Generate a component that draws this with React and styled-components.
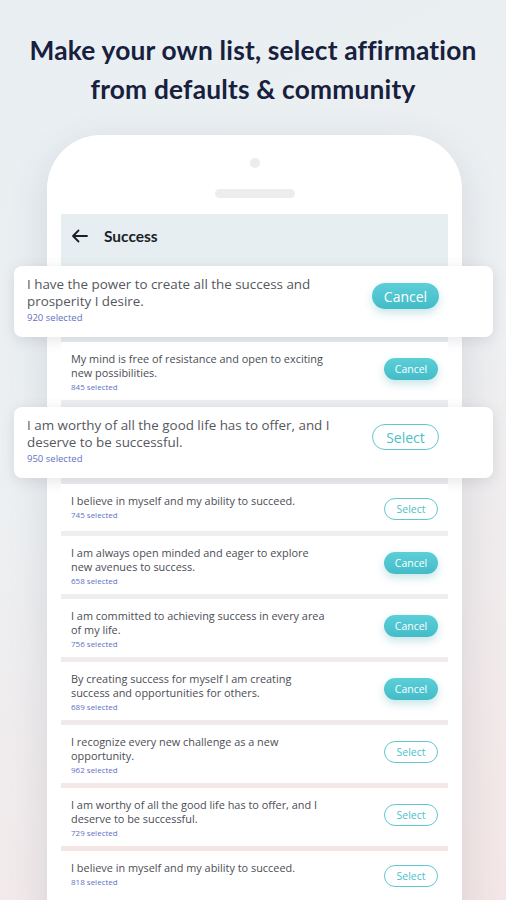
import React from "react";
import styled, { createGlobalStyle } from "styled-components";

const GlobalStyle = createGlobalStyle`
  html, body {
    margin: 0;
    padding: 0;
  }
  body {
    font-family: "Open Sans", "Lato", sans-serif;
  }
`;

const Page = styled.div`
  width: 506px;
  height: 900px;
  overflow: hidden;
  box-sizing: border-box;
  padding-top: 31px;
  background: linear-gradient(155deg, #e8eef2 0%, #edf0f2 45%, #f4e6e6 100%);
`;

const Title = styled.h1`
  margin: 0;
  text-align: center;
  font-family: "Lato", sans-serif;
  font-weight: 700;
  font-size: 26.3px;
  line-height: 39px;
  color: #17203d;
  letter-spacing: 0.2px;
`;

const Phone = styled.div`
  width: 387px;
  height: 820px;
  margin: 26px 0 0 47px;
  padding: 23px 14px 0;
  background: #ffffff;
  border-radius: 54px 54px 0 0;
  box-shadow: 0 12px 40px rgba(60, 70, 90, 0.14);
  display: flex;
  flex-direction: column;
  align-items: center;
`;

const Camera = styled.div`
  width: 10px;
  height: 10px;
  border-radius: 50%;
  background: #ececec;
`;

const Speaker = styled.div`
  width: 80px;
  height: 9px;
  margin-top: 21px;
  border-radius: 5px;
  background: #ededed;
`;

const Screen = styled.div`
  align-self: stretch;
  margin-top: 16px;
  display: flex;
  flex-direction: column;
  gap: 5px;
  background: linear-gradient(180deg, #e9eef1 0%, #eeeeef 50%, #f6e4e4 100%);
`;

const Header = styled.div`
  background: #e6eef1;
`;

const TitleBar = styled.div`
  height: 44px;
  display: flex;
  align-items: center;
  gap: 16px;
  padding: 0 10px;
  margin-bottom: 8px;
  font-family: "Lato", sans-serif;
  font-weight: 700;
  font-size: 15.5px;
  color: #1b1f2a;
`;

const Row = styled.div`
  box-sizing: border-box;
  min-height: 47px;
  background: #ffffff;
  display: flex;
  align-items: flex-start;
  justify-content: space-between;
  padding: 10px 10px 7px;
`;

const Slot = styled.div`
  padding: 2px 0 1px;
`;

const Card = styled.div`
  margin: 0 -45px 0 -47px;
  background: #ffffff;
  border-radius: 8px;
  box-shadow: 0 3px 14px rgba(70, 80, 100, 0.14);
  display: flex;
  align-items: center;
  justify-content: space-between;
  padding: 10px 54px 11px 13px;
`;

const TextCol = styled.div`
  display: flex;
  flex-direction: column;
`;

const Line = styled.div`
  font-size: ${(p) => (p.$big ? "13.4px" : "10.9px")};
  line-height: ${(p) => (p.$big ? "17px" : "14px")};
  color: ${(p) => (p.$big ? "#55575e" : "#4b4d55")};
  white-space: nowrap;
`;

const Count = styled.div`
  font-size: ${(p) => (p.$big ? "9.5px" : "8px")};
  line-height: ${(p) => (p.$big ? "16px" : "13px")};
  color: #6470c4;
`;

const Button = styled.div`
  box-sizing: border-box;
  align-self: center;
  flex-shrink: 0;
  margin-bottom: ${(p) => (p.$big ? "10px" : p.$lift ? "7px" : "0")};
  width: ${(p) => (p.$big ? "67px" : "54px")};
  height: ${(p) => (p.$big ? "26px" : "22px")};
  border-radius: 13px;
  display: flex;
  align-items: center;
  justify-content: center;
  font-size: ${(p) => (p.$big ? "14px" : "10.5px")};
  background: ${(p) =>
    p.$active ? "linear-gradient(180deg, #5ccfd8 0%, #43bcc8 100%)" : "#ffffff"};
  color: ${(p) => (p.$active ? "#ffffff" : "#4cbfc9")};
  border: ${(p) => (p.$active ? "none" : "1.5px solid #62c7d0")};
  box-shadow: ${(p) => (p.$active ? "0 4px 8px rgba(40, 150, 160, 0.25)" : "none")};
`;

const BackArrow = () => (
  <svg width="17" height="14" viewBox="0 0 17 14" fill="none">
    <path d="M16 7H2M7.5 1.5L2 7l5.5 5.5" stroke="#1b1f2a" strokeWidth="1.8" strokeLinecap="round" strokeLinejoin="round" />
  </svg>
);

const rows = [
  { lines: ["My mind is free of resistance and open to exciting", "new possibilities."], count: 845, active: true },
  { featured: true, lines: ["I am worthy of all the good life has to offer, and I", "deserve to be successful."], count: 950, active: false },
  { lines: ["I believe in myself and my ability to succeed."], count: 745, active: false },
  { lines: ["I am always open minded and eager to explore", "new avenues to success."], count: 658, active: true },
  { lines: ["I am committed to achieving success in every area", "of my life."], count: 756, active: true },
  { lines: ["By creating success for myself I am creating", "success and opportunities for others."], count: 689, active: true },
  { lines: ["I recognize every new challenge as a new", "opportunity."], count: 962, active: false },
  { lines: ["I am worthy of all the good life has to offer, and I", "deserve to be successful."], count: 729, active: false },
  { lines: ["I believe in myself and my ability to succeed."], count: 818, active: false },
];

function Affirmation({ lines, count, active, big }) {
  return (
    <>
      <TextCol>
        {lines.map((l) => (
          <Line key={l} $big={big}>{l}</Line>
        ))}
        <Count $big={big}>{count} selected</Count>
      </TextCol>
      <Button $big={big} $lift={lines.length > 1} $active={active}>
        {active ? "Cancel" : "Select"}
      </Button>
    </>
  );
}

export default function App() {
  return (
    <Page>
      <GlobalStyle />
      <Title>
        Make your own list, select affirmation
        <br />
        from defaults &amp; community
      </Title>
      <Phone>
        <Camera />
        <Speaker />
        <Screen>
          <Header>
            <TitleBar>
              <BackArrow />
              Success
            </TitleBar>
            <Card>
              <Affirmation
                big
                lines={["I have the power to create all the success and", "prosperity I desire."]}
                count={920}
                active
              />
            </Card>
          </Header>
          {rows.map((r, i) =>
            r.featured ? (
              <Slot key={i}>
                <Card>
                  <Affirmation big {...r} />
                </Card>
              </Slot>
            ) : (
              <Row key={i}>
                <Affirmation {...r} />
              </Row>
            )
          )}
        </Screen>
      </Phone>
    </Page>
  );
}
